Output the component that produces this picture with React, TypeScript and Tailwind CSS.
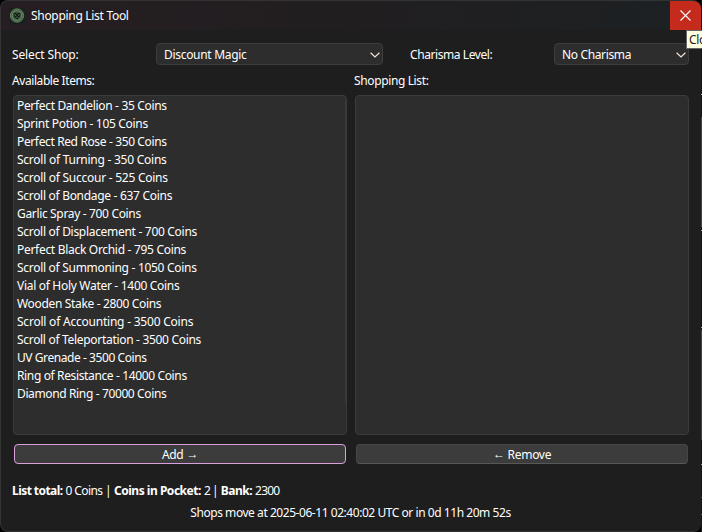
const items = [
  { text: "Perfect Dandelion - 35 Coins", tracking: "tracking-[-0.335px]" },
  { text: "Sprint Potion - 105 Coins", tracking: "tracking-[-0.3px]" },
  { text: "Perfect Red Rose - 350 Coins", tracking: "tracking-[-0.37px]" },
  { text: "Scroll of Turning - 350 Coins", tracking: "tracking-[-0.25px]" },
  { text: "Scroll of Succour - 525 Coins", tracking: "tracking-[-0.26px]" },
  { text: "Scroll of Bondage - 637 Coins", tracking: "tracking-[-0.3px]" },
  { text: "Garlic Spray - 700 Coins", tracking: "tracking-[-0.34px]" },
  { text: "Scroll of Displacement - 700 Coins", tracking: "tracking-[-0.3px]" },
  { text: "Perfect Black Orchid - 795 Coins", tracking: "tracking-[-0.3px]" },
  { text: "Scroll of Summoning - 1050 Coins", tracking: "tracking-[-0.29px]" },
  { text: "Vial of Holy Water - 1400 Coins", tracking: "tracking-[-0.3px]" },
  { text: "Wooden Stake - 2800 Coins", tracking: "tracking-[-0.34px]" },
  { text: "Scroll of Accounting - 3500 Coins", tracking: "tracking-[-0.22px]" },
  { text: "Scroll of Teleportation - 3500 Coins", tracking: "tracking-[-0.31px]" },
  { text: "UV Grenade - 3500 Coins", tracking: "tracking-[-0.43px]" },
  { text: "Ring of Resistance - 14000 Coins", tracking: "tracking-[-0.365px]" },
  { text: "Diamond Ring - 70000 Coins", tracking: "tracking-[-0.37px]" },
];

function AppIcon() {
  return (
    <svg width="16" height="16" viewBox="0 0 16 16" className="shrink-0">
      <rect width="16" height="16" fill="#1a211c" />
      <circle cx="8" cy="7.5" r="6.6" fill="#48644a" stroke="#64805f" strokeWidth="1" />
      <circle cx="8" cy="7.5" r="4.7" fill="#3a543c" stroke="#7d9a77" strokeWidth="0.7" />
      <path d="M4.6 5.4 6.4 4.8 8 6l1.6-1.2 1.8.6-.6 3L8 11.5 5.2 8.4Z" fill="#132017" />
      <path d="M5.8 6.8 7 7.4M10.2 6.8 9 7.4M8 8.6v1.2" stroke="#8fac88" strokeWidth="0.8" fill="none" />
    </svg>
  );
}

function Select({ value, className }: { value: string; className: string }) {
  return (
    <div className={`flex h-[22px] items-center justify-between rounded border border-[#3d3d3d] bg-[#2d2d2d] pl-[7px] pr-0.5 ${className}`}>
      <span className="pt-0.5">{value}</span>
      <svg width="10" height="6" viewBox="0 0 10 6" className="mt-px" fill="none" stroke="#efe3d2" strokeWidth="1.2">
        <path d="M.6.7 5 5 9.4.7" />
      </svg>
    </div>
  );
}

export default function App() {
  return (
    <div className="relative flex h-[532px] w-[702px] overflow-hidden bg-black font-['Noto_Sans','Open_Sans',sans-serif] text-[12px] leading-[18px] tracking-[-0.3px] whitespace-nowrap text-white">
      <div className="flex h-[532px] w-[701px] shrink-0 flex-col overflow-hidden rounded-lg border border-r-0 border-[#333333] bg-[#1e1e1e]">
        <header className="flex h-[29px] shrink-0 items-center justify-between bg-linear-to-r from-[#261e22] via-[#211e20] to-[#1c2123]">
          <div className="flex items-center gap-1.5 pl-2">
            <AppIcon />
            <h1>Shopping List Tool</h1>
          </div>
          <button className="flex h-[29px] w-[31px] items-center justify-center bg-[#c42b1c]">
            <svg width="11" height="11" viewBox="0 0 11 11" stroke="#ffffff" strokeWidth="1.1">
              <path d="m.5.5 10 10M10.5.5l-10 10" />
            </svg>
          </button>
        </header>

        <main className="flex flex-col pr-3 pl-[11px]">
          <div className="mt-[13px] flex h-[22px] items-center">
            <label className="w-36 pt-0.5 tracking-[-0.14px]">Select Shop:</label>
            <Select value="Discount Magic" className="w-[227px]" />
            <label className="ml-[27px] w-[144px] pt-0.5 tracking-[-0.42px]">Charisma Level:</label>
            <Select value="No Charisma" className="w-[135px] tracking-[-0.36px]" />
          </div>

          <div className="mt-[7px] flex h-[18px]">
            <h2 className="w-[342px] tracking-[-0.42px]">Available Items:</h2>
            <h2 className="tracking-[-0.37px]">Shopping List:</h2>
          </div>

          <div className="mt-[5px] flex gap-2 pl-px">
            <div className="relative h-[340px] w-[334px] rounded border border-[#3b3b3b] bg-[#2d2d2d] pt-px pl-[3px]">
              <ul>
                {items.map((item) => (
                  <li key={item.text} className={`h-[18px] ${item.tracking}`}>
                    {item.text}
                  </li>
                ))}
              </ul>
              <div className="absolute top-1 right-0 h-[302px] w-px bg-[#383838]" />
            </div>
            <div className="h-[340px] w-[334px] rounded border border-[#3b3b3b] bg-[#2d2d2d]" />
          </div>

          <div className="mt-[9px] flex gap-2.5 pl-0.5">
            <button className="flex h-5 w-[332px] items-center justify-center gap-[3px] rounded border border-[#d8a0df] bg-[#3c3c3c] pt-0.5">
              <span>Add</span>
              <span className="-mt-0.5">→</span>
            </button>
            <button className="flex h-5 w-[332px] items-center justify-center gap-[3px] rounded border border-[#464646] border-b-[#585858] bg-[#3c3c3c] pt-0.5">
              <span className="-mt-0.5">←</span>
              <span>Remove</span>
            </button>
          </div>

          <p className="mt-[18px] flex gap-[3px]">
            <b className="tracking-[-0.56px]">List total:</b>
            <span className="tracking-[-0.6px]">0 Coins |</span>
            <b className="tracking-[-0.48px]">Coins in Pocket:</b>
            <span className="tracking-[-0.9px]">2 |</span>
            <b className="tracking-[-0.5px]">Bank:</b>
            <span className="tracking-[-0.8px]">2300</span>
          </p>
          <p className="mt-1 text-center tracking-[-0.45px]">Shops move at 2025-06-11 02:40:02 UTC or in 0d 11h 20m 52s</p>
        </main>
      </div>

      <div className="flex w-px flex-col bg-[#151515] pt-[94px]">
        <div className="h-px bg-[#bbbbbb]" />
        <div className="mt-[22px] h-[110px] bg-[#444444]" />
        <div className="mt-[3px] h-px bg-[#aaaaaa]" />
        <div className="mt-24 h-px bg-[#aaaaaa]" />
        <div className="mt-0.5 h-[110px] bg-[#444444]" />
        <div className="mt-6 h-px bg-[#999999]" />
        <div className="mt-8 h-px bg-[#5a5575]" />
        <div className="mt-4 h-px bg-[#5b6c78]" />
      </div>

      <div className="absolute top-[30px] left-[686px] h-[19px] w-5 border border-[#666666] bg-[#ffffe1] pl-0.5 leading-[17px] text-[#222222]">Close</div>
    </div>
  );
}
